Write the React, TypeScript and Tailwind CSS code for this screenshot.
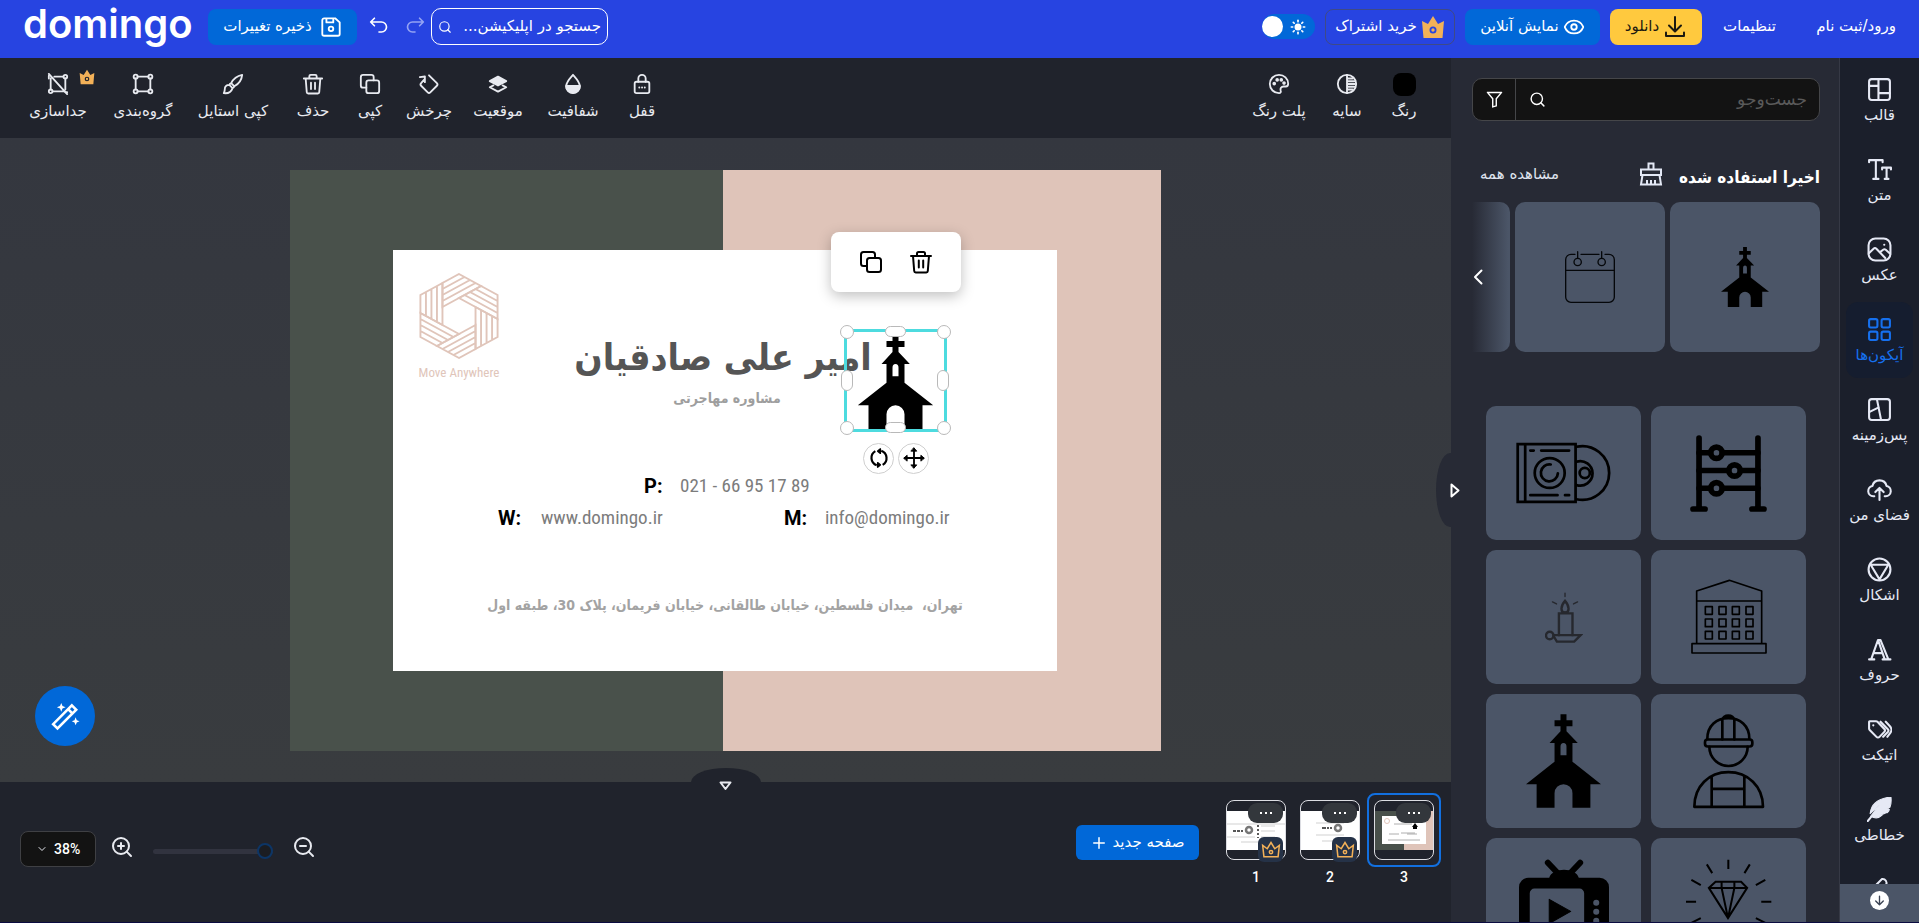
import React, { useState } from "react";
import { ChevronDown, Eye, Plus, Search, Sun, ZoomIn, ZoomOut } from "lucide-react";

type IconProps = {
  children: React.ReactNode;
  className?: string;
  box?: string;
  weight?: number;
};

function Icon({ children, className = "size-6", box = "0 0 24 24", weight = 2 }: IconProps) {
  return (
    <svg
      viewBox={box}
      className={`shrink-0 ${className}`}
      fill="none"
      stroke="currentColor"
      strokeWidth={weight}
      strokeLinecap="round"
      strokeLinejoin="round"
      aria-hidden="true"
    >
      {children}
    </svg>
  );
}

const copyShape = (
  <>
    <rect x="8" y="8" width="14" height="14" rx="2.5" />
    <path d="M8 16H4.500A2.500 2.500 0 0 1 2 13.500v-9A2.500 2.500 0 0 1 4.500 2h9A2.500 2.500 0 0 1 16 4.500V8" />
  </>
);

const trashShape = (
  <>
    <path d="M2 6h20M8 6V3.500A1.500 1.500 0 0 1 9.500 2h5A1.500 1.500 0 0 1 16 3.500V6M4 6l1.200 15a1.500 1.500 0 0 0 1.500 1.400h10.600a1.500 1.500 0 0 0 1.500-1.400L20 6M9.800 10.500v7M14.200 10.500v7" />
  </>
);

function Crown({ className, hole }: { className: string; hole: string }) {
  return (
    <svg viewBox="0 0 24 24" className={`shrink-0 ${className}`} aria-hidden="true">
      <path d="M1 6l6 3 5-8 5 8 6-3-1.500 17h-19z" fill="#f3b158" />
      <circle cx="12" cy="15" r="2.600" fill="#f3b158" stroke={hole} strokeWidth="1.800" />
    </svg>
  );
}

function CrownOutline({ className }: { className: string }) {
  return (
    <Icon className={className} weight={1.8}>
      <path d="M2 6.500l5.500 4L12 3l4.500 7.500 5.500-4L20.500 20h-17z" strokeLinejoin="miter" />
      <circle cx="12" cy="14.500" r="2" />
    </Icon>
  );
}

function Church({ className }: { className: string }) {
  return (
    <svg viewBox="0 0 226 282" className={className} fill="#000" fillRule="evenodd" aria-hidden="true">
      <path d="M104 0h18v18h18v18h-18v15l34 36h-16v56l86 68h-32v71h-54v-44a27 27 0 0 0-54 0v44H32v-71H0l86-68V87H71l33-36V36H86V18h18zM104 124V98a9 11 0 0 1 18 0v26z" />
    </svg>
  );
}

const tools = [
  {
    label: "جداسازی",
    width: "w-[84px]",
    crown: true,
    icon: (
      <>
        <path d="M4 6v12M20 6v12M8 4h10M6 20h12M2 1l20 22" />
        <circle cx="20" cy="4" r="2" />
        <circle cx="4" cy="20" r="2" />
        <path d="M2 6V3M20 21h2" />
      </>
    ),
  },
  {
    label: "گروه‌بندی",
    width: "w-[86px]",
    icon: (
      <>
        <path d="M4 6v12M20 6v12M6 4h12M6 20h12" />
        <circle cx="4" cy="4" r="2.200" />
        <circle cx="20" cy="4" r="2.200" />
        <circle cx="4" cy="20" r="2.200" />
        <circle cx="20" cy="20" r="2.200" />
      </>
    ),
  },
  {
    label: "کپی استایل",
    width: "w-[94px]",
    icon: (
      <>
        <path d="M22 2c-5 1-10 5-12 9l3.500 3.500C18 12 21.500 7 22 2zM10 11c-1 .3-1.800 1-2 2l3.500 3.500c1-.3 1.700-1 2-2M8 13c-3 0-5 2-5 5 0 1.500-.3 2.500-1 4 4 .5 8-1 9.500-5.500" />
      </>
    ),
  },
  { label: "حذف", width: "w-[66px]", icon: trashShape },
  { label: "کپی", width: "w-12", icon: copyShape },
  {
    label: "چرخش",
    width: "w-[70px]",
    icon: (
      <>
        <path d="M12 2.500l8.600 8.600a2 2 0 0 1 0 2.800l-7.200 7.200a2 2 0 0 1-2.800 0l-7.200-7.200a2 2 0 0 1 0-2.800L7 7M2 4.500L7.500 3.800V10" />
      </>
    ),
  },
  {
    label: "موقعیت",
    width: "w-[68px]",
    icon: (
      <>
        <path d="M12 4l9 4.800-9 4.800-9-4.800z" fill="currentColor" />
        <path d="M7 13.500L3 15.500l9 4.800 9-4.800-4-2" />
      </>
    ),
  },
  {
    label: "شفافیت",
    width: "w-[82px]",
    icon: (
      <>
        <path d="M12 2c4 4.500 7.500 8 7.500 12.500a7.500 7.500 0 0 1-15 0C4.500 10 8 6.500 12 2z" />
        <path d="M4.500 14h15a7.500 7.500 0 0 1-15 0z" fill="currentColor" />
      </>
    ),
  },
  {
    label: "قفل",
    width: "w-14",
    icon: (
      <>
        <rect x="4" y="9.500" width="16" height="12.500" rx="2" />
        <path d="M8 9.500V6a4 4 0 0 1 8 0v3.500M9 15.800h.1M12 15.800h.1M15 15.800h.1" />
      </>
    ),
  },
];

const colorTools = [
  {
    label: "پلت رنگ",
    width: "w-[76px]",
    icon: (
      <>
        <path d="M12 2a10 10 0 1 0 0 20c1.800 0 2.300-1.300 1.800-3-.6-2.300.5-4.300 3.200-4.300h2.500c1.500 0 2.500-1.200 2.500-3C22 6 17.500 2 12 2z" />
        <circle cx="6.800" cy="11.500" r="1" fill="currentColor" />
        <circle cx="10" cy="7.500" r="1" fill="currentColor" />
        <circle cx="14.500" cy="7.500" r="1" fill="currentColor" />
        <circle cx="17.500" cy="11" r="1" fill="currentColor" />
      </>
    ),
  },
  {
    label: "سایه",
    width: "w-[60px]",
    icon: (
      <>
        <circle cx="12" cy="12" r="10" />
        <path d="M12 2v20M13 6h5M13 9h7M13 12h8M13 15h7M13 18h5" />
      </>
    ),
  },
];

const sections = [
  {
    label: "قالب",
    icon: (
      <>
        <rect x="2" y="2" width="20" height="20" rx="2.500" />
        <path d="M2 8.500h9M11 2v20M11 15.500h11" />
      </>
    ),
  },
  {
    label: "متن",
    icon: (
      <>
        <path d="M2 5V3h13v2M8.500 3v18M6 21h5M14.500 12v-1.800H23V12M18.800 10.200V21M17 21h3.600" />
      </>
    ),
  },
  {
    label: "عکس",
    icon: (
      <>
        <rect x="1.500" y="1.500" width="21" height="21" rx="6.500" />
        <path d="M1.800 15.500l4.500-4.300a2 2 0 0 1 2.700 0l8.500 9M12.500 14.500l3-2.300a2 2 0 0 1 2.500.1l4 3.500M16.500 7.500h.1" />
      </>
    ),
  },
  {
    label: "آیکون‌ها",
    icon: (
      <>
        <rect x="2" y="2" width="8" height="8" rx="1.500" />
        <rect x="14" y="2" width="8" height="8" rx="1.500" />
        <rect x="2" y="14" width="8" height="8" rx="1.500" />
        <rect x="14" y="14" width="8" height="8" rx="1.500" />
      </>
    ),
  },
  {
    label: "پس‌زمینه",
    icon: (
      <>
        <rect x="2" y="2" width="20" height="20" rx="2.500" />
        <path d="M9.500 2l4 20M2 14.500l9.300-4.500" />
      </>
    ),
  },
  {
    label: "فضای من",
    icon: (
      <>
        <path d="M7 18.500H6a5 5 0 0 1-.8-9.900 7 7 0 0 1 13.600 0A5 5 0 0 1 18 18.500h-1M12 22V11M8 14.500l4-4 4 4" />
      </>
    ),
  },
  {
    label: "اشکال",
    icon: (
      <>
        <circle cx="12" cy="12" r="10.500" />
        <path d="M3.500 7.500h17L12 21.500z" />
      </>
    ),
  },
  {
    label: "حروف",
    icon: (
      <>
        <path d="M4 21.500L10.500 3h2.500l7.500 18.500M11 4l6 17.500M2 21.500h5M15 21.500h7.500M6.500 15.500h8" />
      </>
    ),
  },
  {
    label: "اتیکت",
    icon: (
      <>
        <path d="M2 4.500v6.500a2 2 0 0 0 .6 1.400l6.500 6.700a2 2 0 0 0 2.900 0l4.600-4.800a2 2 0 0 0 0-2.800L10 4.600A2 2 0 0 0 8.600 4H2.500a.5.5 0 0 0-.5.500zM6 8h.1M13 4.500l7 7.200a2 2 0 0 1 0 2.700L15.500 19M18 4.500l4 4.300c1.800 2 1.800 5 0 7L19.500 19" />
      </>
    ),
  },
  {
    label: "خطاطی",
    icon: (
      <>
        <path
          d="M23 0C13 1 4 5 3 16l9-8.500L3.500 18.500C8 21 12 20 14.500 17.500h-2l5-1.800-2-.7h4c1-1 1.700-2 2-3h-3l3.500-2C23 7.500 23.400 3 23 0z"
          fill="currentColor"
          strokeWidth="1"
        />
        <path d="M0 24l4-5" />
      </>
    ),
  },
];

function Disc() {
  return (
    <Icon className="h-[62px] w-24" box="0 0 282 180" weight={8}>
      <g strokeLinejoin="miter">
        <path d="M5 5h170v170H5zM27 5v170" />
        <path d="M42 24h10M74 24h82M42 155h80M144 155h12" />
        <circle cx="99" cy="90" r="44" />
        <path d="M102 65a25 25 0 1 0 21 26" />
        <path d="M177 13a79 79 0 1 1 0 154M177 57a36 36 0 1 1 0 68" />
        <circle cx="202" cy="90" r="15" />
      </g>
    </Icon>
  );
}

function Abacus() {
  return (
    <Icon className="h-[77px] w-[77px]" box="0 0 228 230" weight={17}>
      <path d="M26 9v206M202 9v206M8 221h36M184 221h36" />
      <path d="M26 53h34M96 53h106M26 106h88M150 106h52M26 159h34M96 159h106" />
      <circle cx="78" cy="53" r="17" />
      <circle cx="132" cy="106" r="17" />
      <circle cx="78" cy="159" r="17" />
    </Icon>
  );
}

function Candle() {
  return (
    <Icon className="h-[51px] w-[38px] text-[#26282e]" box="0 0 112 150" weight={7}>
      <g strokeLinejoin="miter">
        <path d="M41 127V63h40v64M59 26c-14 16-14 34 0 34s14-18 0-34z" />
        <path d="M25 127h80l-19 19H35l-9-15" />
        <circle cx="14" cy="128" r="11" />
        <path d="M59 3v10M22 29l12 6M96 29l-12 6" strokeWidth="4" />
      </g>
    </Icon>
  );
}

function Building() {
  return (
    <Icon className="size-[76px]" box="0 0 228 228" weight={5}>
      <path d="M17 192V36l98-32 97 32v156M17 66h195M3 194h222v28H3z" />
      {[83, 120, 157].map((y) =>
        [43, 84, 124, 165].map((x) => <rect key={`${x}-${y}`} x={x} y={y} width="21" height="23" />),
      )}
    </Icon>
  );
}

function Worker() {
  return (
    <Icon className="h-[95px] w-[72px]" box="0 0 216 284" weight={8}>
      <path d="M43 74c0-40 28-62 63-62s63 22 63 62M88 76V18c0-18 36-18 36 0v58" />
      <rect x="36" y="76" width="142" height="21" rx="8" />
      <path d="M49 98a57 57 0 0 0 115 0M4 278c0-62 44-104 102-104s104 42 104 104zM56 188v90M154 188v90M56 224h98" />
    </Icon>
  );
}

function Television() {
  return (
    <svg viewBox="0 0 268 250" className="h-[84px] w-[90px] shrink-0" aria-hidden="true">
      <path d="M86 11l36 38M182 11l-36 38" stroke="#000" strokeWidth="18" strokeLinecap="round" />
      <path
        fillRule="evenodd"
        d="M90 56c8-32 80-32 88 0h62a28 28 0 0 1 28 28v138a28 28 0 0 1-28 28H28a28 28 0 0 1-28-28V84a28 28 0 0 1 28-28zM46 88a14 14 0 0 0-14 14v108a14 14 0 0 0 14 14h134a14 14 0 0 0 14-14V102a14 14 0 0 0-14-14z"
      />
      <path d="M90 120v72l64-36z" strokeLinejoin="round" stroke="#000" strokeWidth="3" />
      <g fill="#4b5567">
        <circle cx="230" cy="130" r="9" />
        <circle cx="230" cy="157" r="9" />
        <circle cx="230" cy="184" r="9" />
      </g>
    </svg>
  );
}

function Diamond() {
  return (
    <Icon className="h-[84px] w-[86px]" box="0 0 256 250" weight={6}>
      <g strokeLinejoin="miter" strokeLinecap="butt">
        <path d="M88 68h76l18 18-57 90-57-90zM68 86h114M106 68v18l19 90 19-90V68" />
        <path d="M126 2v28M62 16l16 26M190 16l-16 26M16 62l28 16M236 62l-28 16M0 127h30M224 127h30M16 190l28-14M236 190l-28-14" />
      </g>
    </Icon>
  );
}

const library = [
  { name: "چرتکه", art: <Abacus /> },
  { name: "دیسک", art: <Disc /> },
  { name: "ساختمان", art: <Building /> },
  { name: "شمع", art: <Candle /> },
  { name: "کارگر", art: <Worker /> },
  { name: "کلیسا", art: <Church className="h-[94px] w-[75px]" /> },
  { name: "الماس", art: <Diamond />, top: true },
  { name: "تلویزیون", art: <Television />, top: true },
];

function Header() {
  const [light, setLight] = useState(false);
  return (
    <header className="flex h-[58px] shrink-0 items-start justify-between bg-[#2744e1] pr-[23px] pl-[23px] text-[15px] whitespace-nowrap text-white">
      <div className="flex h-[53px] items-center">
        <a href="#home" className="w-[185px] self-start font-['Inter',sans-serif] text-[40px] leading-12 font-semibold">
          domingo
        </a>
        <button dir="rtl" className="flex h-9 w-[149px] items-center justify-center gap-2 rounded-lg bg-[#0168d8]">
          <Icon className="size-[22px]">
            <path d="M5 2.500h11.500L21.500 7v12.500a2 2 0 0 1-2 2h-15a2 2 0 0 1-2-2v-15a2 2 0 0 1 2-2zM7 2.500v4.500h7.500V2.500" />
            <circle cx="12" cy="14" r="2.500" />
          </Icon>
          <span>ذخیره تغییرات</span>
        </button>
        <button aria-label="Undo" className="ml-3">
          <Icon className="size-5">
            <path d="M6.500 1.500L2 6l4.500 4.500M2 6h13a6 6 0 0 1 0 12h-3" />
          </Icon>
        </button>
        <button aria-label="Redo" className="ml-4 text-[#94a3f3]">
          <Icon className="size-5">
            <path d="M17.500 1.500L22 6l-4.500 4.500M22 6H9a6 6 0 0 0 0 12h3" />
          </Icon>
        </button>
        <label className="ml-[6px] flex h-[37px] w-[177px] items-center gap-1 rounded-[10px] border border-white px-[6px]">
          <Search className="size-[14px] shrink-0" strokeWidth={2} />
          <input
            dir="rtl"
            aria-label="جستجو"
            placeholder="جستجو در اپلیکیشن..."
            className="w-full min-w-0 bg-transparent outline-none placeholder:text-white"
          />
        </label>
      </div>
      <div className="flex h-[53px] items-center">
        <button
          role="switch"
          aria-checked={light}
          aria-label="Theme"
          onClick={() => setLight(!light)}
          className="flex h-[25px] w-[53px] items-center justify-between rounded-full bg-[#0168d8] pr-[9px]"
        >
          <span className="size-[21px] rounded-full bg-white" />
          <Sun className="size-4" fill="currentColor" strokeWidth={2.5} />
        </button>
        <button dir="rtl" className="ml-[10px] flex h-9 w-[130px] items-center justify-center gap-1 rounded-lg border border-[#3f4a86]">
          <Crown className="size-6" hole="#2744e1" />
          <span>خرید اشتراک</span>
        </button>
        <button dir="rtl" className="ml-[10px] flex h-9 w-[135px] items-center justify-center gap-1 rounded-lg bg-[#0168d8]">
          <Eye className="size-[22px]" />
          <span>نمایش آنلاین</span>
        </button>
        <button dir="rtl" className="ml-[10px] flex h-9 w-[92px] items-center justify-center gap-1 rounded-lg bg-[#ffc93e] text-[#1c1a10]">
          <Icon className="size-6">
            <path d="M12 2v14M6 10.500l6 6 6-6M3 17.500V21h18v-3.500" />
          </Icon>
          <span>دانلود</span>
        </button>
        <nav dir="rtl" className="ml-[21px] flex gap-8">
          <a href="#login" className="w-[88px]">
            ورود/ثبت نام
          </a>
          <a href="#settings" className="w-[53px]">
            تنظیمات
          </a>
        </nav>
      </div>
    </header>
  );
}

function ToolButton({ label, width, icon, crown }: { label: string; width: string; icon: React.ReactNode; crown?: boolean }) {
  return (
    <button className={`relative flex flex-col items-center gap-[6px] ${width}`}>
      <Icon className="size-[22px]">{icon}</Icon>
      {crown && <Crown className="absolute top-[-4px] left-[63px] size-4" hole="#20232c" />}
      <span dir="rtl" className="leading-5 whitespace-nowrap">
        {label}
      </span>
    </button>
  );
}

function Toolbar() {
  return (
    <div className="flex h-20 shrink-0 items-start justify-between bg-[#20232c] pt-[15px] pr-5 pl-4 text-[15px] text-[#e8eaf0]">
      <div className="flex">
        {tools.map((t) => (
          <ToolButton key={t.label} {...t} />
        ))}
      </div>
      <div className="flex">
        {colorTools.map((t) => (
          <ToolButton key={t.label} {...t} />
        ))}
        <button className="flex w-[54px] flex-col items-center gap-[5px]">
          <span className="size-[23px] rounded-lg bg-black" />
          <span dir="rtl" className="leading-5">
            رنگ
          </span>
        </button>
      </div>
    </div>
  );
}

function HexLogo() {
  return (
    <svg viewBox="-41 -43 82 86" className="absolute top-[103px] left-[128px] h-[86px] w-[82px]" fill="none" stroke="#e0c5ba" strokeWidth="1.800" aria-hidden="true">
      <g transform="scale(1.06 1)">
        {[0, 60, 120, 180, 240, 300].map((a) => (
          <g key={a} transform={`rotate(${a})`}>
            <path d="M-36.400 -21L-15.600 -33V9L-36.400 -3zM-31.200 -24V0M-26 -27V3M-20.800 -30V6" />
          </g>
        ))}
      </g>
    </svg>
  );
}

function Knob({ className }: { className: string }) {
  return <span className={`absolute border border-[#b9b9b9] bg-white ${className}`} />;
}

function Artboard() {
  const latin = "font-['Liberation_Sans_Narrow','Roboto_Condensed','Roboto',sans-serif]";
  const persian = "font-['DejaVu_Sans_Condensed','DejaVu_Sans',sans-serif]";
  return (
    <div className="relative h-[581px] w-[871px] shrink-0 bg-[#dfc4b9]">
      <div className="absolute inset-y-0 left-0 w-[433px] bg-[#49514b]" />
      <div className="absolute top-20 left-[103px] h-[421px] w-[664px] bg-white" />
      <HexLogo />
      <p className={`absolute top-[193px] left-[119px] w-[100px] text-center text-[13px] leading-5 whitespace-nowrap text-[#e0c5ba] ${latin}`}>
        Move Anywhere
      </p>
      <p dir="rtl" className={`absolute top-[160px] left-[233px] w-[400px] text-center text-[37px] leading-[56px] font-bold whitespace-nowrap text-[#555] ${persian}`}>
        امیر علی صادقیان
      </p>
      <p dir="rtl" className={`absolute top-[216px] left-[337px] w-[200px] text-center text-[14px] leading-6 font-bold whitespace-nowrap text-[#9e9e9e] ${persian}`}>
        مشاوره مهاجرتی
      </p>
      <dl className="text-[20px] leading-6 whitespace-nowrap text-[#7c7c7c]">
        <dt className="absolute top-[304px] left-[354px] font-['Roboto',sans-serif] font-bold text-black">P:</dt>
        <dd className={`absolute top-[304px] left-[390px] text-[19px] ${latin}`}>021 - 66 95 17 89</dd>
        <dt className="absolute top-[336px] left-[208px] font-['Roboto',sans-serif] font-bold text-black">W:</dt>
        <dd className={`absolute top-[336px] left-[251px] text-[19px] ${latin}`}>www.domingo.ir</dd>
        <dt className="absolute top-[336px] left-[494px] font-['Roboto',sans-serif] font-bold text-black">M:</dt>
        <dd className={`absolute top-[336px] left-[535px] text-[19px] ${latin}`}>info@domingo.ir</dd>
      </dl>
      <p dir="rtl" className={`absolute top-[423px] left-[135px] w-[600px] text-center text-[14px] leading-6 font-bold whitespace-nowrap text-[#a3a3a3] ${persian}`}>
        تهران،&nbsp; میدان فلسطین، خیابان طالقانی، خیابان فریمان، پلاک 30، طبقه اول
      </p>
      <div className="absolute top-[159px] left-[554px] size-[103px] border-[3px] border-[#4ddbdf]">
        <Church className="absolute top-[3px] left-[10px] h-[94px] w-[77px]" />
        <Knob className="-top-[7px] -left-[7px] size-[14px] rounded-full" />
        <Knob className="-top-[7px] -right-[7px] size-[14px] rounded-full" />
        <Knob className="-bottom-[6px] -left-[7px] size-[14px] rounded-full" />
        <Knob className="-right-[7px] -bottom-[6px] size-[14px] rounded-full" />
        <Knob className="-top-[6px] left-[38px] h-[11px] w-[21px] rounded-full" />
        <Knob className="-bottom-[4px] left-[38px] h-[11px] w-[21px] rounded-full" />
        <Knob className="top-[38px] -left-[6px] h-[21px] w-3 rounded-full" />
        <Knob className="top-[38px] -right-[5px] h-[21px] w-3 rounded-full" />
      </div>
      <div className="absolute top-[273px] left-[573px] flex gap-1">
        <button aria-label="Rotate" className="flex size-[31px] items-center justify-center rounded-full border border-[#cfcfcf] bg-white text-black">
          <Icon className="size-[22px]" weight={2.4}>
            <path d="M9.500 20A8.600 8.600 0 0 1 8 4.500M14.500 4A8.600 8.600 0 0 1 16 19.500" strokeLinecap="butt" />
            <path d="M10.500 4.500L13.500 2v5zM13.500 19.500l-3 2.500v-5z" fill="currentColor" strokeWidth="1.500" />
          </Icon>
        </button>
        <button aria-label="Move" className="flex size-[31px] items-center justify-center rounded-full border border-[#cfcfcf] bg-white text-black">
          <Icon className="size-[22px]">
            <path d="M12 2v20M2 12h20" />
            <path d="M12 1l3 3.500H9zM12 23l3-3.500H9zM1 12l3.500-3v6zM23 12l-3.500-3v6z" fill="currentColor" strokeWidth="1" />
          </Icon>
        </button>
      </div>
      <div className="absolute top-[62px] left-[541px] flex h-[60px] w-[130px] items-center justify-center gap-[26px] rounded-lg bg-white text-black shadow-[0_4px_14px_rgba(0,0,0,0.25)]">
        <button aria-label="Copy">
          <Icon className="size-6">{copyShape}</Icon>
        </button>
        <button aria-label="Delete">
          <Icon className="size-6">{trashShape}</Icon>
        </button>
      </div>
    </div>
  );
}

function PageArt({ kind }: { kind: number }) {
  if (kind === 3) {
    return (
      <svg viewBox="0 0 58 39" className="h-[39px] w-[58px]" aria-hidden="true">
        <path d="M0 0h58v39H0z" fill="#dfc4b9" />
        <path d="M0 0h29v39H0z" fill="#49514b" />
        <path d="M7 5h44v28H7z" fill="#fff" />
        <circle cx="12" cy="10" r="2.500" fill="none" stroke="#e0c5ba" />
        <path d="M19 13h18M26 22h14M14 23h10M32 23h10M13 29h32" stroke="#9a9a9a" strokeWidth="0.800" />
        <path d="M40 12l3 4h-1v2h-4v-2h-1z" />
      </svg>
    );
  }
  return (
    <svg viewBox="0 0 58 39" className="h-[39px] w-[58px]" aria-hidden="true">
      <path d="M0 0h58v39H0z" fill="#fff" />
      {kind === 2 ? (
        <>
          <path d="M15 12h28M15 24h28M21 30h12" stroke="#c5c5c5" strokeWidth="0.800" />
          <path d="M21 17h10" stroke="#222" strokeWidth="1.500" strokeDasharray="4 1 2 1" />
          <circle cx="37" cy="17" r="3" fill="none" stroke="#777" strokeWidth="2.500" />
        </>
      ) : (
        <>
          <path d="M0 13h58M0 26h28M34 20h14M34 26h14M14 31h22M34 15h14" stroke="#c5c5c5" strokeWidth="0.800" />
          <path d="M6 20h10" stroke="#222" strokeWidth="1.500" strokeDasharray="3 1 3 1" />
          <circle cx="22" cy="19" r="3" fill="none" stroke="#777" strokeWidth="2.500" />
          <path d="M31 14v13" stroke="#222" strokeWidth="1.500" strokeDasharray="2 2" />
        </>
      )}
    </svg>
  );
}

function PageThumb({ n, active }: { n: number; active?: boolean }) {
  return (
    <div className="flex flex-col items-center font-['Roboto',sans-serif] text-[14px] font-medium text-white">
      <div className={`rounded-lg border-2 p-[5px] ${active ? "border-[#1270e0]" : "border-transparent"}`}>
        <div className="relative flex size-[60px] items-center justify-center rounded-lg border border-[#dcdde2]">
          <button aria-label={`Page ${n}`}>
            <PageArt kind={n} />
          </button>
          <button aria-label={`Page ${n} menu`} className="absolute top-[2px] right-[2px] flex h-5 w-[35px] items-center justify-center gap-[3px] rounded-[9px] bg-[#33373c]">
            <span className="size-[2px] bg-white" />
            <span className="size-[2px] bg-white" />
            <span className="size-[2px] bg-white" />
          </button>
          {!active && (
            <span className="absolute right-[2px] -bottom-[3px] flex size-[25px] items-center justify-center rounded-md bg-[#253247] text-[#f3b158]">
              <CrownOutline className="size-5" />
            </span>
          )}
        </div>
      </div>
      <span>{n}</span>
    </div>
  );
}

function BottomBar() {
  return (
    <footer className="relative flex h-[140px] shrink-0 items-start justify-between bg-[#20232c] pr-[10px] pl-5 text-[#e8eaf0]">
      <button aria-label="Hide pages" className="absolute -top-[14px] left-1/2 flex h-7 w-[70px] -translate-x-1/2 items-end justify-center rounded-t-[50%] bg-[#20232c] pb-[5px]">
        <Icon className="h-[10px] w-[13px]" box="0 0 13 10" weight={2}>
          <path d="M1.500 1.500h10l-5 6.500z" />
        </Icon>
      </button>
      <div className="flex items-center pt-[49px]">
        <label className="relative flex items-center">
          <select
            aria-label="Zoom"
            defaultValue="38"
            className="h-9 w-[76px] appearance-none rounded-lg border border-[#3f4044] bg-[#131313] pl-[33px] font-['Roboto',sans-serif] text-[14px] font-medium text-white"
          >
            <option value="38">38%</option>
            <option value="100">100%</option>
          </select>
          <ChevronDown className="pointer-events-none absolute left-4 size-3" />
        </label>
        <button aria-label="Zoom in" className="-mt-1 ml-[14px]">
          <ZoomIn className="size-6" />
        </button>
        <input
          type="range"
          aria-label="Zoom level"
          defaultValue={100}
          className="mt-1 ml-[19px] h-[5px] w-[120px] appearance-none rounded-full bg-[#31333f] [&::-webkit-slider-thumb]:size-4 [&::-webkit-slider-thumb]:appearance-none [&::-webkit-slider-thumb]:rounded-full [&::-webkit-slider-thumb]:border-2 [&::-webkit-slider-thumb]:border-[#0c3566] [&::-webkit-slider-thumb]:bg-[#1b1d22]"
        />
        <button aria-label="Zoom out" className="-mt-1 ml-[19px]">
          <ZoomOut className="size-6" />
        </button>
      </div>
      <div className="flex items-start pt-[11px]">
        <button className="mt-8 mr-5 flex h-[35px] w-[123px] items-center justify-center gap-1 rounded-md bg-[#0168d8] text-[15px] text-white">
          <Plus className="size-[18px]" />
          <span dir="rtl">صفحه جدید</span>
        </button>
        <PageThumb n={1} />
        <PageThumb n={2} />
        <PageThumb n={3} active />
      </div>
    </footer>
  );
}

function Panel() {
  return (
    <aside className="relative flex w-[389px] shrink-0 flex-col border-r border-[#363945] bg-[#272a35] text-white">
      <button aria-label="Hide panel" className="absolute top-[395px] -left-[15px] h-[74px] w-7 rounded-l-[50%] bg-[#272a35] pl-[14px]">
        <Icon className="h-[15px] w-[10px]" box="0 0 10 15" weight={2}>
          <path d="M1.500 1.500v12L8.500 7.500z" />
        </Icon>
      </button>
      <div className="min-h-0 flex-1 overflow-hidden pt-5">
        <div className="mr-[19px] ml-[21px] flex h-[43px] items-center rounded-[10px] border border-[#454649] bg-[#131313]">
          <button aria-label="Filter" className="flex h-full w-[43px] shrink-0 items-center justify-center border-r border-[#454649]">
            <Icon className="size-[17px]">
              <path d="M2 2h20l-7.500 9v10l-5 1.500V11z" />
            </Icon>
          </button>
          <Search className="ml-[13px] size-[17px] shrink-0" />
          <input
            dir="rtl"
            aria-label="جست‌وجو در آیکون‌ها"
            placeholder="جست‌وجو"
            className="w-full min-w-0 bg-transparent px-3 text-[17px] outline-none placeholder:text-[#5a5a5a]"
          />
        </div>
        <div dir="rtl" className="mt-[37px] mr-[19px] flex h-8 items-center">
          <h2 className="mt-2 font-['DejaVu_Sans_Condensed','DejaVu_Sans',sans-serif] text-[17px] font-bold">
            اخیرا استفاده شده
          </h2>
          <button aria-label="پاک کردن" className="mr-4 text-[#e3e8f5]">
            <Icon className="size-6">
              <path d="M9.500 7.500V1.500h5v6M2 7.500h20V13H2zM3.500 13L2 22.500h20L20.500 13M8 22v-4M12 22v-4M16 22v-4" strokeLinejoin="miter" strokeLinecap="butt" />
            </Icon>
          </button>
          <a href="#all" className="mr-auto ml-[29px] text-[15px] text-[#dfe3ee]">
            مشاهده همه
          </a>
        </div>
        <div dir="rtl" className="relative mt-3 mr-[19px] ml-[21px] flex gap-[5px] overflow-hidden">
          <button aria-label="کلیسا" className="flex size-[150px] shrink-0 items-center justify-center rounded-[10px] bg-[#4b5567]">
            <Church className="h-[60px] w-12" />
          </button>
          <button aria-label="تقویم" className="flex size-[150px] shrink-0 items-center justify-center rounded-[10px] bg-[#4b5567] text-[#05070a]">
            <Icon className="h-[52px] w-[50px]" box="0 0 150 156" weight={4}>
              <path d="M30 10H18A16 16 0 0 0 2 26v112a16 16 0 0 0 16 16h114a16 16 0 0 0 16-16V26a16 16 0 0 0-16-16h-12M48 10h54M2 58h146M38 2v20M110 2v20" />
              <circle cx="38" cy="33" r="11" />
              <circle cx="110" cy="33" r="11" />
            </Icon>
          </button>
          <div className="size-[150px] shrink-0 rounded-[10px] bg-[#4b5567]" />
          <button aria-label="بعدی" dir="ltr" className="absolute inset-y-0 left-0 flex w-9 items-center bg-linear-to-r from-[#272a35] to-transparent pl-px">
            <Icon className="h-4 w-[10px]" box="0 0 10 16" weight={2}>
              <path d="M8.500 1.500L2 8l6.500 6.500" />
            </Icon>
          </button>
        </div>
        <div dir="rtl" className="mt-[54px] mr-[33px] ml-[35px] grid grid-cols-2 gap-[10px]">
          {library.map((item) => (
            <button
              key={item.name}
              aria-label={item.name}
              className={`flex h-[134px] justify-center rounded-[10px] bg-[#4b5567] text-black ${item.top ? "items-start pt-[21px]" : "items-center"}`}
            >
              {item.art}
            </button>
          ))}
        </div>
      </div>
    </aside>
  );
}

function Sidebar() {
  return (
    <nav className="relative w-[79px] shrink-0 overflow-hidden bg-[#1b1f2b] px-[6px] pt-1 text-[15px] text-[#e6e9f5]">
      {sections.map((s, i) => (
        <button
          key={s.label}
          className={`mb-1 flex h-19 w-full flex-col items-center gap-[3px] rounded-xl pt-[15px] ${i === 3 ? "bg-[#151d2f] text-[#1670ee]" : ""}`}
        >
          <Icon className="size-[25px]">{s.icon}</Icon>
          <span dir="rtl" className="leading-5 whitespace-nowrap">
            {s.label}
          </span>
        </button>
      ))}
      <span className="flex h-19 justify-center pt-[13px] pl-2">
        <Icon className="size-6">
          <path d="M4 10l6-6a4 4 0 0 1 4 6l-5 6" />
        </Icon>
      </span>
      <button aria-label="More" className="absolute inset-x-0 bottom-0 flex h-[38px] items-start justify-center bg-[#4b5567] pt-[7px]">
        <span className="flex size-[19px] items-center justify-center rounded-full bg-white text-[#3c4454]">
          <Icon className="size-[13px]" weight={2.5}>
            <path d="M12 4v16M5 13l7 7 7-7" />
          </Icon>
        </span>
      </button>
    </nav>
  );
}

export default function App() {
  return (
    <div className="flex h-screen flex-col overflow-hidden border-b border-[#0a0b40] bg-[#20232c] font-['DejaVu_Sans',sans-serif]">
      <Header />
      <div className="flex min-h-0 flex-1">
        <main className="flex min-w-0 flex-1 flex-col">
          <Toolbar />
          <section className="relative flex min-h-0 flex-1 items-center justify-center overflow-hidden bg-linear-to-b from-[#34373f] to-[#393c3f]">
            <Artboard />
            <button aria-label="Assistant" className="absolute bottom-9 left-[35px] flex size-[60px] items-center justify-center rounded-full bg-[#0168d8] text-white">
              <Icon className="size-[30px]">
                <path d="M17.500 3.500l3.500 3.500L6 22l-3.500-3.500zM14.500 6.500l3.500 3.500" strokeLinejoin="miter" />
                <path d="M9 1.500l1 2.500 2.500 1-2.500 1-1 2.500L8 6 5.500 5 8 4zM20.500 13l.9 2.300 2.200.9-2.200.9-.9 2.300-.9-2.300-2.200-.9 2.200-.9z" fill="currentColor" stroke="none" />
              </Icon>
            </button>
          </section>
          <BottomBar />
        </main>
        <Panel />
        <Sidebar />
      </div>
    </div>
  );
}
